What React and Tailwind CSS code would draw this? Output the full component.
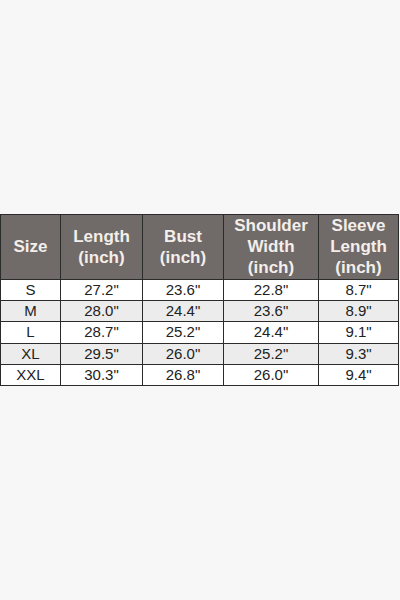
import React from "react";

const rows = [
  ["S", '27.2"', '23.6"', '22.8"', '8.7"'],
  ["M", '28.0"', '24.4"', '23.6"', '8.9"'],
  ["L", '28.7"', '25.2"', '24.4"', '9.1"'],
  ["XL", '29.5"', '26.0"', '25.2"', '9.3"'],
  ["XXL", '30.3"', '26.8"', '26.0"', '9.4"'],
];

export default function App() {
  return (
    <div
      className="w-[400px] h-[600px] bg-[#f7f7f7] flex items-center"
      style={{ fontFamily: '"Liberation Sans", Arial, sans-serif' }}
    >
      <table className="w-[398px] border-collapse table-fixed">
        <colgroup>
          <col className="w-[60px]" />
          <col className="w-[82px]" />
          <col className="w-[81px]" />
          <col className="w-[95px]" />
          <col className="w-[80px]" />
        </colgroup>
        <thead>
          <tr className="h-[65px] bg-[#706a68] text-[#f4efea] font-bold text-[17px] leading-[21px]">
            <th className="border-[1.5px] border-[#2b2b2b] font-bold">Size</th>
            <th className="border-[1.5px] border-[#2b2b2b] font-bold">
              Length
              <br />
              (inch)
            </th>
            <th className="border-[1.5px] border-[#2b2b2b] font-bold">
              Bust
              <br />
              (inch)
            </th>
            <th className="border-[1.5px] border-[#2b2b2b] font-bold">
              Shoulder
              <br />
              Width
              <br />
              (inch)
            </th>
            <th className="border-[1.5px] border-[#2b2b2b] font-bold">
              Sleeve
              <br />
              Length
              <br />
              (inch)
            </th>
          </tr>
        </thead>
        <tbody>
          {rows.map((r, i) => (
            <tr
              key={r[0]}
              className={
                "h-[21.4px] text-[15px] leading-[20px] text-[#222] " +
                (i % 2 === 1 ? "bg-[#ececec]" : "bg-white")
              }
            >
              {r.map((c, j) => (
                <td
                  key={j}
                  className="border-[1.5px] border-[#2b2b2b] text-center p-0"
                >
                  {c}
                </td>
              ))}
            </tr>
          ))}
        </tbody>
      </table>
    </div>
  );
}
